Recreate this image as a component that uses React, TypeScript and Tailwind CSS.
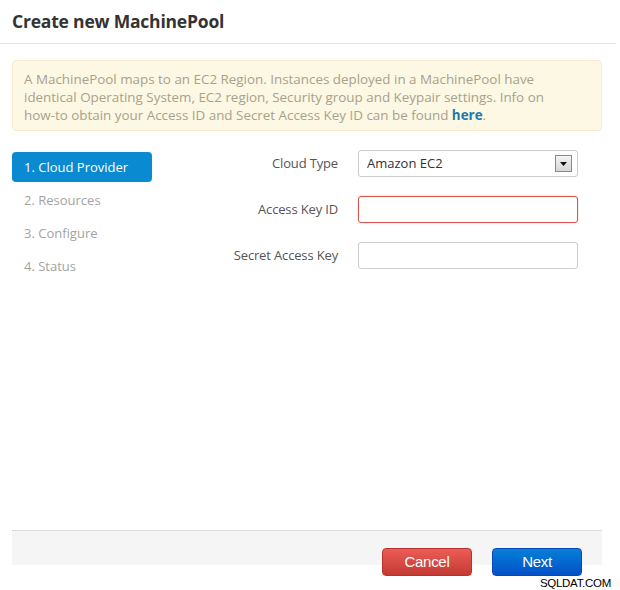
import React from "react";

export default function App() {
  const font = { fontFamily: '"Open Sans", "Noto Sans", sans-serif' };
  return (
    <div className="relative w-[620px] h-[590px] bg-white flex flex-col overflow-hidden" style={font}>
      <div className="h-[44px] mr-[4px] border-b border-[#e5e5e5] flex items-center px-[12px]">
        <h1 className="text-[17.5px] font-bold text-[#333] tracking-[-0.2px]">Create new MachinePool</h1>
      </div>
      <div className="px-[12px] pt-[16px]">
        <div className="w-[590px] h-[71px] bg-[#fcf8e3] border border-[#f7ecd0] rounded-[4px] px-[11px] pt-[9px] pb-[7px] text-[13.4px] leading-[18px] text-[#a9a18c]">
          A MachinePool maps to an EC2 Region. Instances deployed in a MachinePool have identical Operating System, EC2 region, Security group and Keypair settings. Info on <span className="whitespace-nowrap">how-to</span> obtain your Access ID and Secret Access Key ID can be found{" "}
          <a className="font-bold text-[#1b78ad]">here</a>.
        </div>
      </div>
      <div className="flex px-[12px] pt-[21px]">
        <div className="w-[140px] flex flex-col gap-[3px] text-[13px]">
          <div className="h-[30px] rounded-[4px] bg-[#0a8ad0] text-white flex items-center px-[12px] pt-[1px]">1. Cloud Provider</div>
          <div className="h-[30px] text-[#a3a3a3] flex items-center px-[12px] pt-[1px]">2. Resources</div>
          <div className="h-[30px] text-[#a3a3a3] flex items-center px-[12px] pt-[1px]">3. Configure</div>
          <div className="h-[30px] text-[#a3a3a3] flex items-center px-[12px] pt-[1px]">4. Status</div>
        </div>
        <div className="flex flex-col gap-[19px] -mt-[2px] text-[13px] text-[#555]">
          <div className="flex items-center">
            <label className="w-[206px] text-right pr-[20px] tracking-[-0.15px]">Cloud Type</label>
            <div className="w-[220px] h-[27px] border border-[#ccc] rounded-[3px] flex items-center justify-between pl-[8px] pr-[5px] text-[#333]">
              <span>Amazon EC2</span>
              <span className="w-[17px] h-[17px] border border-[#888] bg-gradient-to-b from-[#f4f4f4] to-[#d6d6d6] flex items-center justify-center">
                <svg width="7" height="4" viewBox="0 0 7 4"><path d="M0 0H7L3.5 4Z" fill="#111" /></svg>
              </span>
            </div>
          </div>
          <div className="flex items-center">
            <label className="w-[206px] text-right pr-[20px] tracking-[-0.15px]">Access Key ID</label>
            <div className="w-[220px] h-[27px] border border-[#d9534f] rounded-[3px] shadow-[0_0_2px_rgba(217,83,79,0.35)]" />
          </div>
          <div className="flex items-center">
            <label className="w-[206px] text-right pr-[20px] tracking-[-0.15px]">Secret Access Key</label>
            <div className="w-[220px] h-[27px] border border-[#ccc] rounded-[3px]" />
          </div>
        </div>
      </div>
      <div className="flex-1" />
      <div className="mx-[12px] mb-[25px] w-[590px] h-[35px] bg-[#f5f5f5] border-t border-[#dcdcdc] flex justify-end gap-[20px] pt-[17px] pr-[20px]">
        <button className="w-[90px] h-[28px] rounded-[4px] border border-[#b8332d] bg-gradient-to-b from-[#ec5c56] to-[#c33a33] text-white text-[15px] tracking-[-0.3px]" style={{ fontFamily: '"Liberation Sans", Arial, sans-serif' }}>Cancel</button>
        <button className="w-[90px] h-[28px] rounded-[4px] border border-[#0548b8] bg-gradient-to-b from-[#0a7fd6] to-[#0650c8] text-white text-[15px] tracking-[-0.3px]" style={{ fontFamily: '"Liberation Sans", Arial, sans-serif' }}>Next</button>
      </div>
      <div className="absolute left-[540px] top-[575px] text-[11.5px] text-black tracking-[-0.3px]" style={{ fontFamily: '"Liberation Sans", Arial, sans-serif' }}>SQLDAT.COM</div>
    </div>
  );
}
